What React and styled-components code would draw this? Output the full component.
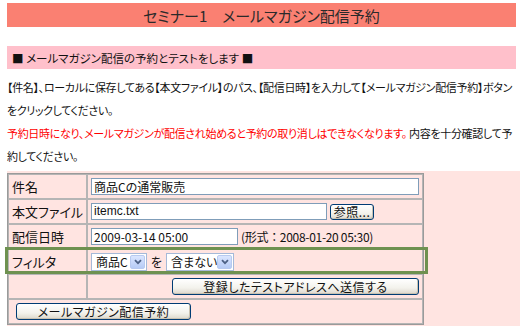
import React from 'react';
import styled, { createGlobalStyle } from 'styled-components';

const GlobalStyle = createGlobalStyle`
  body {
    margin: 0;
    background: #fff;
    font-family: "Noto Sans CJK JP", "Noto Sans", sans-serif;
    font-feature-settings: "palt";
    color: #111;
  }
`;

const Page = styled.div`
  width: 524px;
  box-sizing: border-box;
  padding: 3px 4px 0 7px;
`;

const Header = styled.div`
  height: 24px;
  width: 509px;
  background: #fa8072;
  display: flex;
  align-items: center;
  justify-content: center;
  font-size: 15px;
  color: #2a2a2a;
`;

const SectionBar = styled.div`
  margin-top: 19px;
  height: 23px;
  width: 509px;
  background: #ffc0cb;
  display: flex;
  align-items: center;
  padding-left: 5px;
  box-sizing: border-box;
  font-size: 11.5px;
`;

const Intro = styled.div`
  margin-top: 7px;
  font-size: 11px;
  line-height: 23px;
`;

const IntroLine = styled.div`
  white-space: nowrap;
  letter-spacing: -0.4px;
  width: ${p => (p.$fit ? '505px' : 'auto')};
  text-align: ${p => (p.$fit ? 'justify' : 'left')};
  text-align-last: ${p => (p.$fit ? 'justify' : 'auto')};
  text-justify: inter-character;
`;

const Warn = styled.span`
  color: #ff0000;
`;

const FormArea = styled.div`
  position: relative;
  margin-top: 3px;
  width: 513px;
  height: 155px;
  padding-top: 2px;
  box-sizing: border-box;
  background: #ffe4e1;
`;

const Table = styled.table`
  width: 417px;
  table-layout: fixed;
  border-collapse: separate;
  border-spacing: 0;
  border: 1px solid #9a9a9a;
`;

const Cell = styled.td`
  height: 25px;
  box-sizing: border-box;
  padding: 0 3px;
  border: 1px solid #b5b5b5;
  font-size: ${p => (p.$label ? '13px' : '12px')};
  width: ${p => (p.$label ? '79px' : 'auto')};
  white-space: nowrap;
`;

const Line = styled.div`
  display: flex;
  align-items: center;
  justify-content: ${p => (p.$end ? 'flex-end' : 'flex-start')};
  gap: ${p => p.$gap || 3}px;
`;

const TextBox = styled.div`
  width: ${p => p.$w}px;
  height: 17px;
  box-sizing: border-box;
  border: 1px solid #7f9db9;
  background: #fff;
  font-size: 12px;
  line-height: 15px;
  padding-left: 2px;
  font-family: ${p => (p.$latin ? '"Liberation Sans", sans-serif' : 'inherit')};
`;

const Note = styled.span`
  font-size: 12px;
  font-feature-settings: normal;
  letter-spacing: -0.3px;
`;

const Button = styled.div`
  width: ${p => p.$w}px;
  height: ${p => p.$h || 17}px;
  margin-left: ${p => p.$ml || 0}px;
  box-sizing: border-box;
  border: 1px solid #003c74;
  border-radius: 3px;
  background: linear-gradient(#ffffff, #f3f2ec 60%, #dcd7cb);
  box-shadow: inset -1px -1px 0 #c9c2b2;
  display: flex;
  align-items: center;
  justify-content: center;
  font-size: 12px;
  letter-spacing: 0.5px;
  color: #111;
`;

const SelectBox = styled.div`
  width: ${p => p.$w}px;
  height: 18px;
  box-sizing: border-box;
  border: 1px solid #a5b9d8;
  background: #fff;
  display: flex;
  align-items: center;
  justify-content: space-between;
  padding: 0 1px 0 4px;
  font-size: 12px;
`;

const Arrow = styled.span`
  width: 15px;
  height: 14px;
  box-sizing: border-box;
  border: 1px solid #b8caf0;
  border-radius: 2px;
  background: linear-gradient(#dbe6ff, #b6cbf5);
  display: flex;
  align-items: center;
  justify-content: center;
`;

const Highlight = styled.div`
  position: absolute;
  left: -2px;
  top: 76px;
  width: 423px;
  height: 27px;
  box-sizing: border-box;
  border: 3px solid #6e9150;
  pointer-events: none;
`;

const Select = ({ w, children }) => (
  <SelectBox $w={w}>
    <span>{children}</span>
    <Arrow>
      <svg width="8" height="6" viewBox="0 0 8 6">
        <path d="M1 1.2 L4 4.2 L7 1.2" fill="none" stroke="#4d6185" strokeWidth="1.8" />
      </svg>
    </Arrow>
  </SelectBox>
);

export default function App() {
  return (
    <Page>
      <GlobalStyle />
      <Header>セミナー1　メールマガジン配信予約</Header>
      <SectionBar>■ メールマガジン配信の予約とテストをします ■</SectionBar>
      <Intro>
        <IntroLine $fit>
          【件名】、ローカルに保存してある【本文ファイル】のパス、【配信日時】を入力して【メールマガジン配信予約】ボタン
        </IntroLine>
        <IntroLine>をクリックしてください。</IntroLine>
        <IntroLine $fit>
          <Warn>予約日時になり、メールマガジンが配信され始めると予約の取り消しはできなくなります。</Warn> 内容を十分確認して予
        </IntroLine>
        <IntroLine>約してください。</IntroLine>
      </Intro>
      <FormArea>
        <Table>
          <tbody>
            <tr>
              <Cell $label>件名</Cell>
              <Cell>
                <TextBox $w={328}>商品Cの通常販売</TextBox>
              </Cell>
            </tr>
            <tr>
              <Cell $label>本文ファイル</Cell>
              <Cell>
                <Line>
                  <TextBox $w={236} $latin>itemc.txt</TextBox>
                  <Button $w={44} $h={16}>参照...</Button>
                </Line>
              </Cell>
            </tr>
            <tr>
              <Cell $label>配信日時</Cell>
              <Cell>
                <Line>
                  <TextBox $w={147}>2009-03-14 05:00</TextBox>
                  <Note>(形式：2008-01-20 05:30)</Note>
                </Line>
              </Cell>
            </tr>
            <tr>
              <Cell $label>フィルタ</Cell>
              <Cell>
                <Line $gap={4}>
                  <Select w={56}>商品C</Select>
                  <span>を</span>
                  <Select w={68}>含まない</Select>
                </Line>
              </Cell>
            </tr>
            <tr>
              <Cell $label></Cell>
              <Cell>
                <Line $end>
                  <Button $w={247}>登録したテストアドレスへ送信する</Button>
                </Line>
              </Cell>
            </tr>
            <tr>
              <Cell colSpan={2}>
                <Line>
                  <Button $w={175} $ml={4}>メールマガジン配信予約</Button>
                </Line>
              </Cell>
            </tr>
          </tbody>
        </Table>
        <Highlight />
      </FormArea>
    </Page>
  );
}
